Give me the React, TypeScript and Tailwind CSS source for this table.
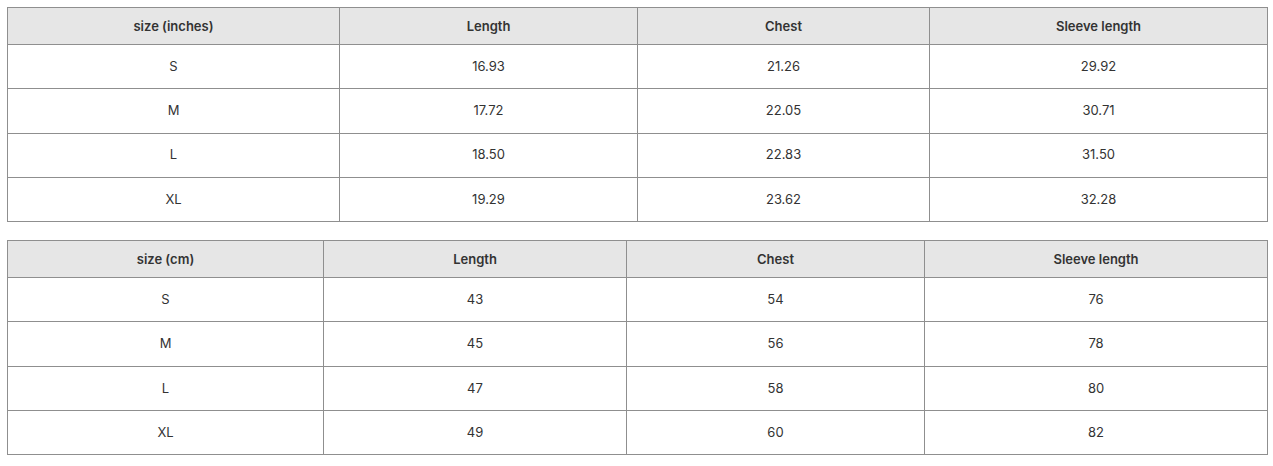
const inches = {
  title: "size (inches)",
  widths: ["w-[332px]", "w-[298px]", "w-[292px]", "w-[338px]"],
  rows: [
    ["S", "16.93", "21.26", "29.92"],
    ["M", "17.72", "22.05", "30.71"],
    ["L", "18.50", "22.83", "31.50"],
    ["XL", "19.29", "23.62", "32.28"],
  ],
};

const cm = {
  title: "size (cm)",
  widths: ["w-[316px]", "w-[303px]", "w-[298px]", "w-[343px]"],
  rows: [
    ["S", "43", "54", "76"],
    ["M", "45", "56", "78"],
    ["L", "47", "58", "80"],
    ["XL", "49", "60", "82"],
  ],
};

function SizeTable({ data }: { data: typeof inches }) {
  const head = [data.title, "Length", "Chest", "Sleeve length"];
  return (
    <table className="w-[1261px] table-fixed border-collapse text-center text-[13px] text-[#333]">
      <thead>
        <tr className="h-[37px] bg-[#e6e6e6]">
          {head.map((h, i) => (
            <th key={h} className={`${data.widths[i]} border border-[#8f8f8f] pt-px font-semibold`}>
              {h}
            </th>
          ))}
        </tr>
      </thead>
      <tbody>
        {data.rows.map((r) => (
          <tr key={r[0]} className="h-[44.3px]">
            {r.map((c, i) => (
              <td key={i} className="border border-[#8f8f8f]">
                {c}
              </td>
            ))}
          </tr>
        ))}
      </tbody>
    </table>
  );
}

export default function App() {
  return (
    <div className="flex flex-col gap-[18px] bg-white px-[7px] pt-[7px] font-['Inter',sans-serif]">
      <SizeTable data={inches} />
      <SizeTable data={cm} />
    </div>
  );
}
